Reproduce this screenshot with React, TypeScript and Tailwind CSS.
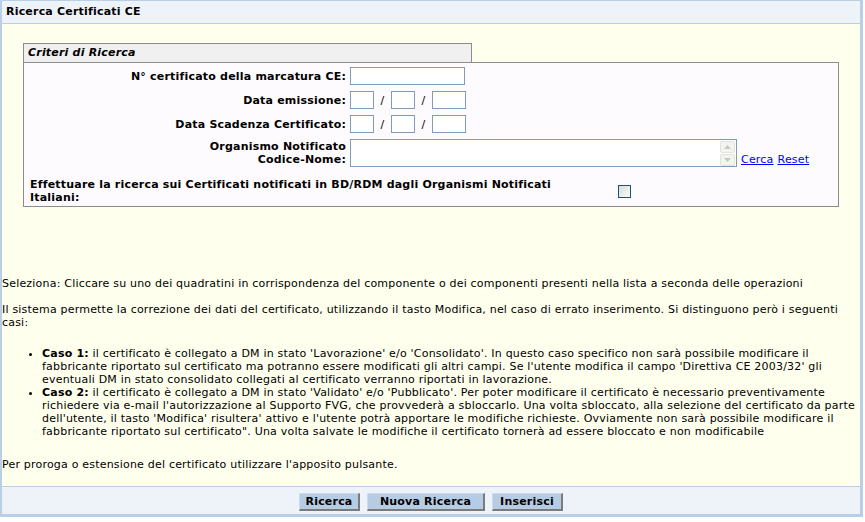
import React from "react";

function DateInputs() {
  return (
    <div className="flex items-center h-[18px]">
      <input className="w-[24px] h-[18px] border border-[#7f9db9] bg-white outline-none" />
      <span className="w-[17px] text-center">/</span>
      <input className="w-[24px] h-[18px] border border-[#7f9db9] bg-white outline-none" />
      <span className="w-[17px] text-center">/</span>
      <input className="w-[34px] h-[18px] border border-[#7f9db9] bg-white outline-none" />
    </div>
  );
}

function Btn({ label, w }: { label: string; w: string }) {
  return (
    <button
      className={`${w} h-[18px] bg-[#b5cce4] border-t border-l border-t-[#cddcec] border-l-[#cddcec] border-r-2 border-b-2 border-r-[#7b7b7b] border-b-[#7b7b7b] font-bold text-[11px] leading-[14px] tracking-[0.2px] text-black`}
    >
      {label}
    </button>
  );
}

export default function App() {
  return (
    <div className="w-[863px] h-[517px] flex flex-col border-l-2 border-t border-r-[3px] border-b-[3px] border-[#b8cfe5] bg-[#ffffee] text-[11px] leading-[13px] tracking-[0.2px] text-black font-['DejaVu_Sans',Verdana,sans-serif]">
      <div className="h-[23px] shrink-0 bg-[#eef3fa] border-b border-[#b8cfe5] pl-[4px] font-bold leading-[22px]">
        Ricerca Certificati CE
      </div>

      <div className="flex-1 flex flex-col">
        <div className="ml-[21px] mt-[19px]">
          <div className="w-[449px] h-[20px] border border-[#8c8c8c] bg-[#f0f0f0] pl-[4px] italic font-bold leading-[18px]">
            Criteri di Ricerca
          </div>
          <div className="w-[816px] -mt-px border border-[#8c8c8c] bg-[#fdfbfd] pt-[4px] pb-[2px]">
            <div className="grid grid-cols-[322px_1fr] gap-x-[4px] gap-y-[6px] items-center">
              <div className="text-right font-bold">N° certificato della marcatura CE:</div>
              <input className="w-[115px] h-[18px] border border-[#7f9db9] bg-white outline-none" />

              <div className="text-right font-bold">Data emissione:</div>
              <DateInputs />

              <div className="text-right font-bold">Data Scadenza Certificato:</div>
              <DateInputs />

              <div className="text-right font-bold">
                Organismo Notificato
                <br />
                Codice-Nome:
              </div>
              <div className="flex items-end">
                <div className="w-[387px] h-[28px] border border-[#7f9db9] bg-white flex justify-end">
                  <div className="w-[17px] flex flex-col items-center pt-[1px] gap-[1px]">
                    <div className="w-[15px] h-[12px] bg-[#f3f3ef] border border-[#e3e3dc] rounded-[2px] flex items-center justify-center">
                      <svg width="7" height="4" viewBox="0 0 7 4">
                        <path d="M0 4 L3.5 0 L7 4 Z" fill="#c9c9c2" />
                      </svg>
                    </div>
                    <div className="w-[15px] h-[12px] bg-[#f3f3ef] border border-[#e3e3dc] rounded-[2px] flex items-center justify-center">
                      <svg width="7" height="4" viewBox="0 0 7 4">
                        <path d="M0 0 L3.5 4 L7 0 Z" fill="#c9c9c2" />
                      </svg>
                    </div>
                  </div>
                </div>
                <a className="ml-[4px] text-[#0000ff] underline mb-[1px]" href="#">
                  Cerca
                </a>
                <a className="ml-[4px] text-[#0000ff] underline mb-[1px]" href="#">
                  Reset
                </a>
              </div>
            </div>
            <div className="flex items-center mt-[11px]">
              <div className="ml-[6px] w-[560px] font-bold">
                Effettuare la ricerca sui Certificati notificati in BD/RDM dagli Organismi Notificati Italiani:
              </div>
              <div className="ml-[28px] w-[13px] h-[13px] border border-[#1c5180] bg-gradient-to-br from-[#dcdcd6] to-[#fafaf8]"></div>
            </div>
          </div>
        </div>

        <p className="mt-[70px]">
          Seleziona: Cliccare su uno dei quadratini in corrispondenza del componente o dei componenti presenti nella lista a seconda delle operazioni
        </p>
        <p className="mt-[13px]">
          Il sistema permette la correzione dei dati del certificato, utilizzando il tasto Modifica, nel caso di errato inserimento. Si distinguono però i seguenti casi:
        </p>
        <ul className="list-disc pl-[40px] mt-[18px]">
          <li>
            <b>Caso 1:</b> il certificato è collegato a DM in stato 'Lavorazione' e/o 'Consolidato'. In questo caso specifico non sarà possibile modificare il fabbricante riportato sul certificato ma potranno essere modificati gli altri campi. Se l'utente modifica il campo 'Direttiva CE 2003/32' gli eventuali DM in stato consolidato collegati al certificato verranno riportati in lavorazione.
          </li>
          <li>
            <b>Caso 2:</b> il certificato è collegato a DM in stato 'Validato' e/o 'Pubblicato'. Per poter modificare il certificato è necessario preventivamente richiedere via e-mail l'autorizzazione al Supporto FVG, che provvederà a sbloccarlo. Una volta sbloccato, alla selezione del certificato da parte dell'utente, il tasto 'Modifica' risultera' attivo e l'utente potrà apportare le modifiche richieste. Ovviamente non sarà possibile modificare il fabbricante riportato sul certificato". Una volta salvate le modifiche il certificato tornerà ad essere bloccato e non modificabile
          </li>
        </ul>
        <p className="mt-[20px]">Per proroga o estensione del certificato utilizzare l'apposito pulsante.</p>
      </div>

      <div className="h-[28px] shrink-0 bg-[#eef3fa] border-t border-[#b8cfe5] flex justify-center items-start pt-[6px] gap-[7px]">
        <Btn label="Ricerca" w="w-[61px]" />
        <Btn label="Nuova Ricerca" w="w-[118px]" />
        <Btn label="Inserisci" w="w-[71px]" />
      </div>
    </div>
  );
}
